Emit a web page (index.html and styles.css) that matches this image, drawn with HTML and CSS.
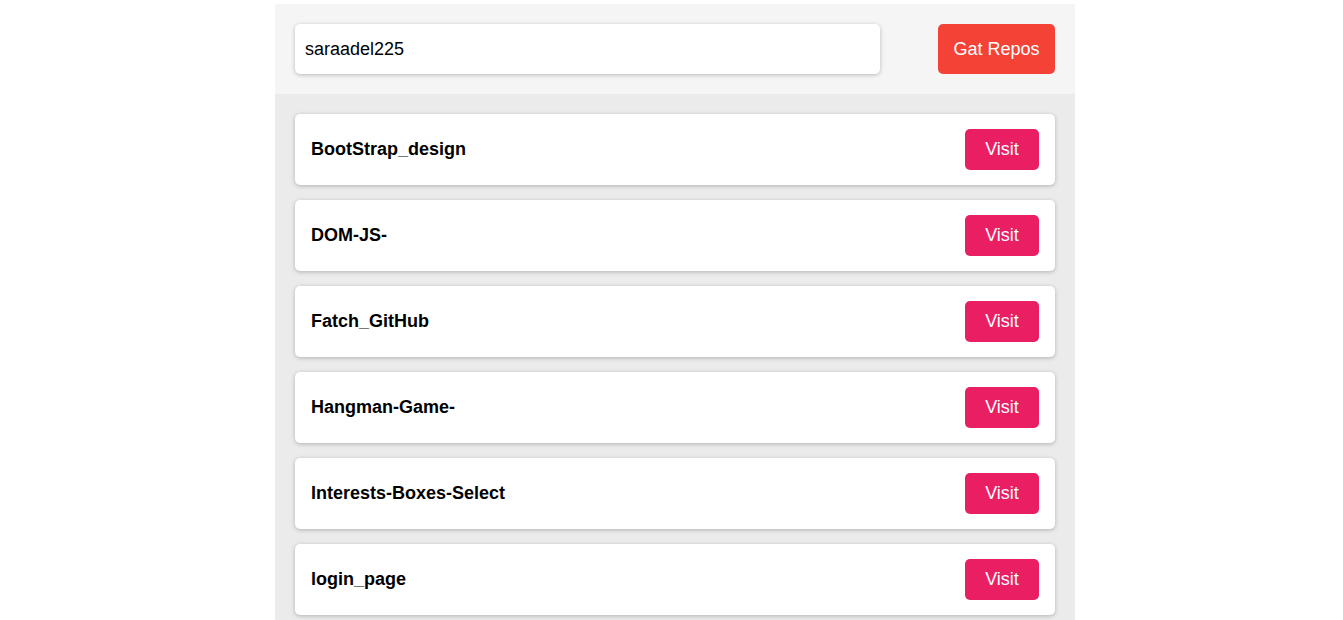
FILE: index.html
```html
<!DOCTYPE html>
<html>
<head>
<meta charset="utf-8">
<link rel="stylesheet" href="styles.css">
</head>
<body>
<div class="container">
  <div class="get-repos">
    <input class="user-input" type="text" value="saraadel225">
    <span class="get-button">Gat Repos</span>
  </div>
  <div class="show-data">
    <div class="repo-box"><span class="repo-name">BootStrap_design</span><a class="visit">Visit</a></div>
    <div class="repo-box"><span class="repo-name">DOM-JS-</span><a class="visit">Visit</a></div>
    <div class="repo-box"><span class="repo-name">Fatch_GitHub</span><a class="visit">Visit</a></div>
    <div class="repo-box"><span class="repo-name">Hangman-Game-</span><a class="visit">Visit</a></div>
    <div class="repo-box"><span class="repo-name">Interests-Boxes-Select</span><a class="visit">Visit</a></div>
    <div class="repo-box"><span class="repo-name">login_page</span><a class="visit">Visit</a></div>
  </div>
</div>
</body>
</html>
```

FILE: styles.css
```css
* { box-sizing: border-box; }
body {
  margin: 0;
  font-family: "Liberation Sans", Arial, sans-serif;
  background: #fff;
}
.container {
  width: 800px;
  margin: 4px 0 0 275px;
}
.get-repos {
  background: #f5f5f5;
  padding: 20px;
  display: flex;
  justify-content: space-between;
  align-items: center;
}
.user-input {
  width: 585px;
  height: 50px;
  border: none;
  border-radius: 5px;
  background: #fff;
  box-shadow: 0 1px 4px rgba(0,0,0,0.25);
  padding: 0 10px;
  font-family: "Liberation Sans", Arial, sans-serif;
  font-size: 18px;
  color: #000;
  outline: none;
}
.get-button {
  width: 117px;
  height: 50px;
  background: #f44336;
  color: #fff;
  border-radius: 5px;
  font-size: 18px;
  display: flex;
  align-items: center;
  justify-content: center;
}
.show-data {
  background: #ebebeb;
  padding: 20px 20px 20px;
  display: flex;
  flex-direction: column;
  gap: 15px;
}
.repo-box {
  background: #fff;
  border-radius: 5px;
  box-shadow: 0 1px 4px rgba(0,0,0,0.25);
  padding: 15px 16px;
  height: 71px;
  display: flex;
  justify-content: space-between;
  align-items: center;
}
.repo-name {
  font-weight: bold;
  font-size: 18px;
  color: #000;
}
.visit {
  width: 74px;
  height: 41px;
  background: #e91e63;
  color: #fff;
  border-radius: 5px;
  font-size: 18px;
  display: flex;
  align-items: center;
  justify-content: center;
}
```
